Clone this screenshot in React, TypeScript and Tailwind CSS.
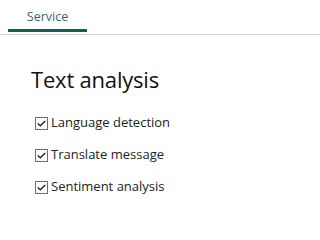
import React from "react";

const Check = () => (
  <span className="flex h-[13px] w-[13px] shrink-0 items-center justify-center border border-[#6e6e6e] bg-white">
    <svg width="9" height="7" viewBox="0 0 9 7" fill="none">
      <path d="M0.8 3.4 L3.3 5.8 L8.2 0.9" stroke="#1f1f1f" strokeWidth="1.4" />
    </svg>
  </span>
);

const items = ["Language detection", "Translate message", "Sentiment analysis"];

export default function App() {
  return (
    <div className="h-[233px] w-full bg-white" style={{ fontFamily: '"Segoe UI", "Open Sans", sans-serif' }}>
      <div className="flex h-[35px] border-b border-[#d4d4d4] pl-[8px]">
        <div className="flex h-[32px] w-[79px] flex-col items-center">
          <span className="mt-[8px] text-[12.5px] leading-[18px] text-[#3a6472]">Service</span>
          <span className="mt-auto h-[3px] w-full bg-[#115e57]" />
        </div>
      </div>
      <div className="pl-[31px] pt-[28px]">
        <div className="text-[22px] leading-[32px] tracking-[-0.2px] text-[#111]">Text analysis</div>
        <div className="mt-[18px] flex flex-col gap-[12px] pl-[4px]">
          {items.map((t) => (
            <label key={t} className="flex h-[20px] items-center gap-[3px] text-[13px] text-[#222]">
              <Check />
              <span>{t}</span>
            </label>
          ))}
        </div>
      </div>
    </div>
  );
}
